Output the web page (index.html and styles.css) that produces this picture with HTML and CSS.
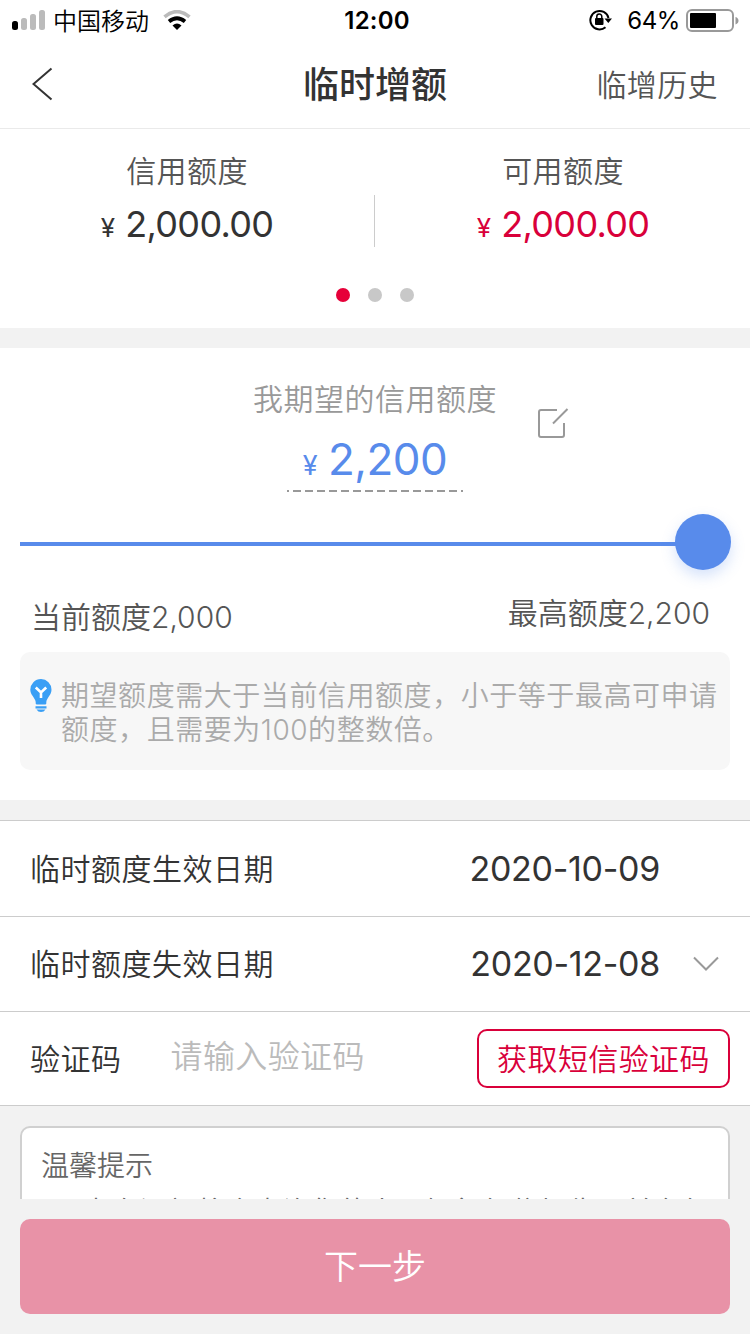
FILE: index.html
```html
<!DOCTYPE html>
<html lang="zh-CN">
<head>
<meta charset="utf-8">
<meta name="viewport" content="width=750">
<title>临时增额</title>
<link rel="stylesheet" href="styles.css">
</head>
<body>
<div class="page">
	<div class="status">
		<div class="status-left">
			<svg class="signal" width="34" height="22" viewBox="0 0 34 22">
				<rect x="0" y="12" width="6" height="9" rx="2.5" fill="#000"/>
				<rect x="9" y="9" width="6" height="12" rx="2.5" fill="#bbb"/>
				<rect x="18" y="5" width="6" height="16" rx="2.5" fill="#bbb"/>
				<rect x="27" y="1" width="6" height="20" rx="2.5" fill="#bbb"/>
			</svg>
			<span class="carrier">中国移动</span>
			<svg class="wifi" width="28" height="20" viewBox="0 0 28 20">
				<path d="M1.500 6.800Q14 -3.500 26.500 6.800" fill="none" stroke="#bbb" stroke-width="3.600"/>
				<path d="M6 11.500Q14 5 22 11.500" fill="none" stroke="#000" stroke-width="3.800"/>
				<path d="M9.500 15.500Q14 11.500 18.500 15.500L14 20Z" fill="#000"/>
			</svg>
		</div>
		<div class="clock">12:00</div>
		<div class="status-right">
			<svg class="lock" width="24" height="22" viewBox="0 0 24 22">
				<path d="M16.500 18.200A9.200 9.200 0 1 1 19.500 9" fill="none" stroke="#000" stroke-width="2"/>
				<path d="M15.500 9.500h7.500l-3.700 4.500z" fill="#000"/>
				<rect x="6" y="9" width="8.500" height="7" rx="1" fill="#000"/>
				<path d="M7.800 10V7.500a2.500 2.500 0 0 1 5 0V10" fill="none" stroke="#000" stroke-width="1.500"/>
			</svg>
			<span class="percent">64%</span>
			<svg class="battery" width="53" height="24" viewBox="0 0 53 24">
				<rect x="1" y="2" width="46" height="21" rx="5" fill="none" stroke="#999" stroke-width="2"/>
				<rect x="4" y="5" width="26" height="15" rx="1" fill="#000"/>
				<path d="M49.500 9q3 1 3 3.700t-3 3.700z" fill="#999"/>
			</svg>
		</div>
	</div>

	<div class="nav">
		<svg class="back" width="22" height="34" viewBox="0 0 22 34"><path d="M19.500 1.500L1.500 17L19.500 32.500" fill="none" stroke="#333" stroke-width="2"/></svg>
		<h1>临时增额</h1>
		<a class="history">临增历史</a>
	</div>

	<div class="quota">
		<div class="quota-cols">
			<div class="quota-item">
				<p class="quota-name">信用额度</p>
				<p class="quota-num"><span class="yen">¥</span>2,000.00</p>
			</div>
			<div class="quota-line"></div>
			<div class="quota-item red">
				<p class="quota-name">可用额度</p>
				<p class="quota-num"><span class="yen">¥</span>2,000.00</p>
			</div>
		</div>
		<div class="dots"><i class="on"></i><i></i><i></i></div>
	</div>

	<div class="expect">
		<div class="expect-head">
			<div class="expect-box">
				<p class="expect-name">我期望的信用额度</p>
				<p class="expect-num"><span class="yen">¥</span>2,200</p>
				<svg class="dash" width="176" height="2" viewBox="0 0 176 2"><path d="M0 1H176" stroke="#999" stroke-width="2" stroke-dasharray="8 4" stroke-dashoffset="6"/></svg>
			</div>
			<svg class="edit" width="32" height="32" viewBox="0 0 32 32">
				<path d="M20 2H4Q2 2 2 4V27Q2 29 4 29H25Q27 29 27 27V15M16 15.500L30.500 1" fill="none" stroke="#999" stroke-width="2"/>
			</svg>
		</div>
		<div class="slider"><div class="knob"></div></div>
		<div class="range">
			<span class="range-min">当前额度2,000</span>
			<span class="range-max">最高额度2,200</span>
		</div>
		<div class="tip">
			<svg class="bulb" width="22" height="34" viewBox="0 0 22 34">
				<path d="M11 0A10.700 10.700 0 0 1 21.500 10.800C21.500 16 17 18.500 16.300 23V24.500Q16.300 25.500 15 25.500H7Q5.700 25.500 5.700 24.500V23C5 18.500 .3 16 .3 10.800A10.700 10.700 0 0 1 11 0Z" fill="#3a9ff5"/>
				<path d="M5.800 8.500L11 13.500L16.200 8.500M11 13.500V19" fill="none" stroke="#fff" stroke-width="2.600"/>
				<path d="M5.500 27.300H16.500V29.500H5.500ZM6.500 30.500H15.500Q14 33 11 33Q8 33 6.500 30.500Z" fill="#3a9ff5"/>
			</svg>
			<p>期望额度需大于当前信用额度，小于等于最高可申请额度，且需要为100的整数倍。</p>
		</div>
	</div>

	<div class="form">
		<div class="row">
			<label>临时额度生效日期</label>
			<span class="date">2020-10-09</span>
		</div>
		<div class="row">
			<label>临时额度失效日期</label>
			<span class="date">2020-12-08</span>
			<svg class="down" width="26" height="16" viewBox="0 0 26 16"><path d="M1 1.500L13 13.500L25 1.500" fill="none" stroke="#999" stroke-width="2"/></svg>
		</div>
		<div class="row code">
			<label>验证码</label>
			<input type="text" class="code-input" placeholder="请输入验证码">
			<button class="code-btn">获取短信验证码</button>
		</div>
	</div>

	<div class="notice-wrap">
		<div class="notice">
			<p class="notice-title">温馨提示</p>
			<p class="notice-text">本次调额将会查询您的人民银行征信报告，并在征</p>
		</div>
	</div>

	<div class="footer">
		<button class="next">下一步</button>
	</div>
</div>
</body>
</html>
```
FILE: styles.css
```css
*
{
	box-sizing: border-box;
	margin: 0;
	padding: 0;
}
body
{
	width: 750px;
	height: 1334px;
	background: #f2f2f2;
	color: #333;
	font-family: Inter, "Noto Sans CJK SC", sans-serif;
	font-weight: 350;
	overflow: hidden;
}
.page
{
	display: flex;
	flex-direction: column;
	height: 1334px;
}
.status
{
	display: grid;
	grid-template-columns: 1fr auto 1fr;
	align-items: center;
	height: 40px;
	padding: 0 12px;
	background: #fff;
	color: #000;
	font-size: 24px;
}
.status-left, .status-right
{
	display: flex;
	align-items: center;
}
.status-right
{
	justify-content: flex-end;
	margin-right: -1px;
}
.carrier
{
	margin: 0 14px 0 7px;
	padding-top: 3px;
	line-height: 37px;
}
.clock
{
	padding: 2px 0 0 4px;
	font-weight: 600;
	letter-spacing: 0.2px;
	line-height: 38px;
}
.percent
{
	margin: 0 6px 0 14px;
	padding-top: 1px;
	font-weight: 400;
	letter-spacing: -0.4px;
}
.nav
{
	display: grid;
	grid-template-columns: 1fr auto 1fr;
	align-items: center;
	height: 89px;
	padding: 0 32px;
	border-bottom: 1px solid #eaeaea;
	background: #fff;
}
.nav h1
{
	padding-top: 3px;
	font-size: 36px;
	font-weight: 500;
	line-height: 85px;
}
.history
{
	justify-self: end;
	padding-bottom: 3px;
	color: #555;
	font-size: 30px;
	letter-spacing: 0.4px;
}
.quota
{
	height: 199px;
	background: #fff;
}
.quota-cols
{
	display: flex;
	height: 152px;
}
.quota-item
{
	flex: 1;
	padding-top: 21px;
	text-align: center;
}
.quota-line
{
	width: 1px;
	height: 52px;
	margin: 66px 1px 0 0;
	background: #ccc;
}
.quota-name
{
	color: #555;
	font-size: 30px;
	letter-spacing: 0.4px;
	line-height: 42px;
}
.quota-num
{
	margin-top: 9px;
	font-size: 36px;
	font-weight: 380;
	letter-spacing: -0.7px;
	line-height: 46px;
}
.quota-num .yen
{
	margin-right: 11px;
	font-size: 26px;
}
.red .quota-num
{
	color: #d9003a;
}
.dots
{
	display: flex;
	justify-content: center;
	gap: 18px;
	padding-top: 7px;
}
.dots i
{
	width: 14px;
	height: 14px;
	border-radius: 50%;
	background: #c8c8c8;
}
.dots .on
{
	background: #e60039;
}
.expect
{
	height: 452px;
	margin-top: 20px;
	padding: 0 20px;
	background: #fff;
}
.expect-head
{
	display: grid;
	grid-template-columns: 1fr 244px 1fr;
	height: 164px;
	padding-top: 30px;
}
.expect-box
{
	display: flex;
	flex-direction: column;
	align-items: center;
	grid-column: 2;
}
.expect-name
{
	color: #999;
	font-size: 30px;
	letter-spacing: 0.5px;
	line-height: 42px;
	white-space: nowrap;
}
.expect-num
{
	margin-top: 12px;
	color: #588beb;
	font-size: 44px;
	font-weight: 380;
	letter-spacing: -0.5px;
	line-height: 54px;
}
.expect-num .yen
{
	margin-right: 11px;
	font-size: 27px;
}
.dash
{
	margin-top: -3px;
}
.edit
{
	margin: 30px 0 0 40px;
}
.slider
{
	display: flex;
	align-items: center;
	justify-content: flex-end;
	height: 60px;
	margin-right: -1px;
	background: linear-gradient(#588beb, #588beb) no-repeat 0 30px / 680px 4px;
}
.knob
{
	width: 56px;
	height: 56px;
	border-radius: 50%;
	background: #588beb;
	box-shadow: 0 6px 14px rgba(88, 139, 235, 0.25);
}
.range
{
	display: flex;
	justify-content: space-between;
	padding: 19px 20px 0 11px;
	color: #555;
	font-size: 30px;
	line-height: 44px;
}
.range-min
{
	padding-top: 4px;
}
.tip
{
	display: flex;
	height: 118px;
	margin-top: 13px;
	padding: 27px 9px 0 10px;
	border-radius: 10px;
	background: #f7f7f7;
}
.bulb
{
	flex: none;
}
.tip p
{
	width: 664px;
	margin-left: 9px;
	color: #aaa;
	font-size: 28px;
	letter-spacing: 0.55px;
	line-height: 34px;
}
.form
{
	margin-top: 20px;
	border-top: 1px solid #ccc;
	background: #fff;
}
.row
{
	display: flex;
	align-items: center;
	height: 95px;
	padding: 0 20px 0 30px;
	border-bottom: 1px solid #ccc;
}
.row:first-child
{
	height: 96px;
}
.row label
{
	padding-bottom: 4px;
	font-size: 30px;
	letter-spacing: 0.5px;
}
.date
{
	margin-left: auto;
	margin-right: 70px;
	padding-bottom: 1px;
	font-size: 34px;
	font-weight: 380;
	letter-spacing: -0.3px;
}
.date + .down
{
	margin-left: -37px;
	margin-right: 11px;
}
.row.code
{
	height: 94px;
}
.code-input
{
	flex: 1;
	min-width: 0;
	height: 60px;
	margin-left: 49px;
	padding-bottom: 4px;
	border: 0;
	background: none;
	font: inherit;
	font-size: 32px;
	letter-spacing: 0.4px;
}
.code-input::placeholder
{
	color: #bbb;
}
.code-btn
{
	width: 253px;
	height: 59px;
	padding-bottom: 4px;
	border: 2px solid #d9003a;
	border-radius: 10px;
	background: #fff;
	color: #d9003a;
	font: inherit;
	font-size: 30px;
	letter-spacing: 0.4px;
}
.notice-wrap
{
	height: 93px;
	padding: 20px 20px 0;
	overflow: hidden;
}
.notice
{
	height: 200px;
	padding: 17px 19px;
	border: 2px solid #d0d0d0;
	border-radius: 10px;
	background: #fff;
	color: #666;
	font-size: 28px;
	line-height: 42px;
}
.notice-text
{
	margin: 4px 0 0 -15px;
	text-indent: 2em;
	letter-spacing: 0.6px;
	white-space: nowrap;
}
.footer
{
	padding: 20px;
}
.next
{
	width: 710px;
	height: 95px;
	padding-bottom: 4px;
	border: 0;
	border-radius: 10px;
	background: #e892a7;
	color: #fff;
	font: inherit;
	font-size: 34px;
}
```
